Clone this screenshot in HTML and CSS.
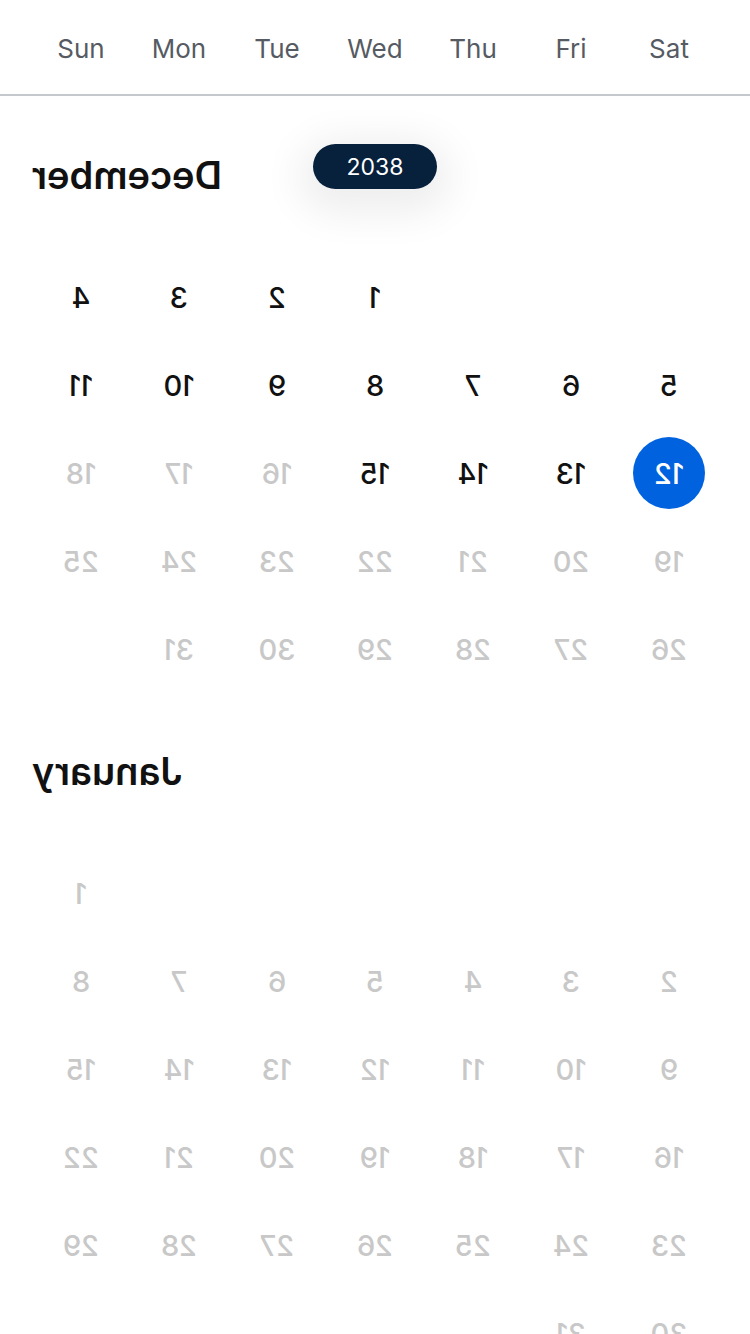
FILE: index.html
```html
<!DOCTYPE html>
<html lang="en">
<head>
<meta charset="utf-8">
<title>Calendar</title>
<link rel="stylesheet" href="styles.css">
</head>
<body>
<div class="app">
  <header class="weekdays">
    <span>Sun</span><span>Mon</span><span>Tue</span><span>Wed</span><span>Thu</span><span>Fri</span><span>Sat</span>
  </header>
  <div class="year-pill">2038</div>
  <main class="months">
    <section class="month">
      <h2 class="month-title">December</h2>
      <div class="days">
        <span class="day empty"></span><span class="day empty"></span><span class="day empty"></span>
        <span class="day">1</span><span class="day">2</span><span class="day">3</span><span class="day">4</span>
        <span class="day">5</span><span class="day">6</span><span class="day">7</span><span class="day">8</span><span class="day">9</span><span class="day">10</span><span class="day">11</span>
        <span class="day selected"><b>12</b></span><span class="day">13</span><span class="day">14</span><span class="day">15</span><span class="day off">16</span><span class="day off">17</span><span class="day off">18</span>
        <span class="day off">19</span><span class="day off">20</span><span class="day off">21</span><span class="day off">22</span><span class="day off">23</span><span class="day off">24</span><span class="day off">25</span>
        <span class="day off">26</span><span class="day off">27</span><span class="day off">28</span><span class="day off">29</span><span class="day off">30</span><span class="day off">31</span><span class="day empty"></span>
      </div>
    </section>
    <section class="month">
      <h2 class="month-title">January</h2>
      <div class="days">
        <span class="day empty"></span><span class="day empty"></span><span class="day empty"></span><span class="day empty"></span><span class="day empty"></span><span class="day empty"></span>
        <span class="day off">1</span>
        <span class="day off">2</span><span class="day off">3</span><span class="day off">4</span><span class="day off">5</span><span class="day off">6</span><span class="day off">7</span><span class="day off">8</span>
        <span class="day off">9</span><span class="day off">10</span><span class="day off">11</span><span class="day off">12</span><span class="day off">13</span><span class="day off">14</span><span class="day off">15</span>
        <span class="day off">16</span><span class="day off">17</span><span class="day off">18</span><span class="day off">19</span><span class="day off">20</span><span class="day off">21</span><span class="day off">22</span>
        <span class="day off">23</span><span class="day off">24</span><span class="day off">25</span><span class="day off">26</span><span class="day off">27</span><span class="day off">28</span><span class="day off">29</span>
        <span class="day off">30</span><span class="day off">31</span>
      </div>
    </section>
  </main>
</div>
</body>
</html>
```
FILE: styles.css
```css
html, body {
  margin: 0;
  padding: 0;
  height: 1334px;
  overflow: hidden;
  background: #ffffff;
}

.app {
  position: relative;
  width: 750px;
  height: 1334px;
  overflow: hidden;
  font-family: Inter, "Liberation Sans", Arial, sans-serif;
}

.weekdays {
  display: grid;
  grid-template-columns: repeat(7, 98px);
  padding: 0 32px;
  height: 94px;
  align-items: center;
  border-bottom: 2px solid #c5c8cc;
  font-size: 26px;
  color: #565b63;
}

.weekdays span {
  text-align: center;
  padding-top: 2px;
}

.year-pill {
  position: absolute;
  top: 144px;
  left: 313px;
  width: 124px;
  height: 45px;
  border-radius: 23px;
  background: #07203c;
  color: #ffffff;
  font-size: 23px;
  display: flex;
  align-items: center;
  justify-content: center;
  box-shadow: 0 10px 40px 14px rgba(0, 0, 0, 0.07);
  z-index: 2;
}

.months {
  transform: scaleX(-1);
  padding-top: 1px;
}

.month {
  padding-top: 53px;
}

.month-title {
  margin: 0 32px 53px 0;
  height: 50px;
  line-height: 50px;
  text-align: right;
  font-size: 38px;
  font-weight: 600;
  color: #111111;
}

.days {
  display: grid;
  grid-template-columns: repeat(7, 98px);
  grid-auto-rows: 88px;
  padding: 0 32px;
}

.day {
  display: flex;
  align-items: center;
  justify-content: center;
  font-size: 29px;
  font-weight: 500;
  color: #111111;
}

.day.off {
  color: #c8c8c8;
}

.day.selected b {
  display: flex;
  align-items: center;
  justify-content: center;
  width: 72px;
  height: 72px;
  border-radius: 50%;
  background: #0162e0;
  color: #ffffff;
  font-weight: 500;
}
```
